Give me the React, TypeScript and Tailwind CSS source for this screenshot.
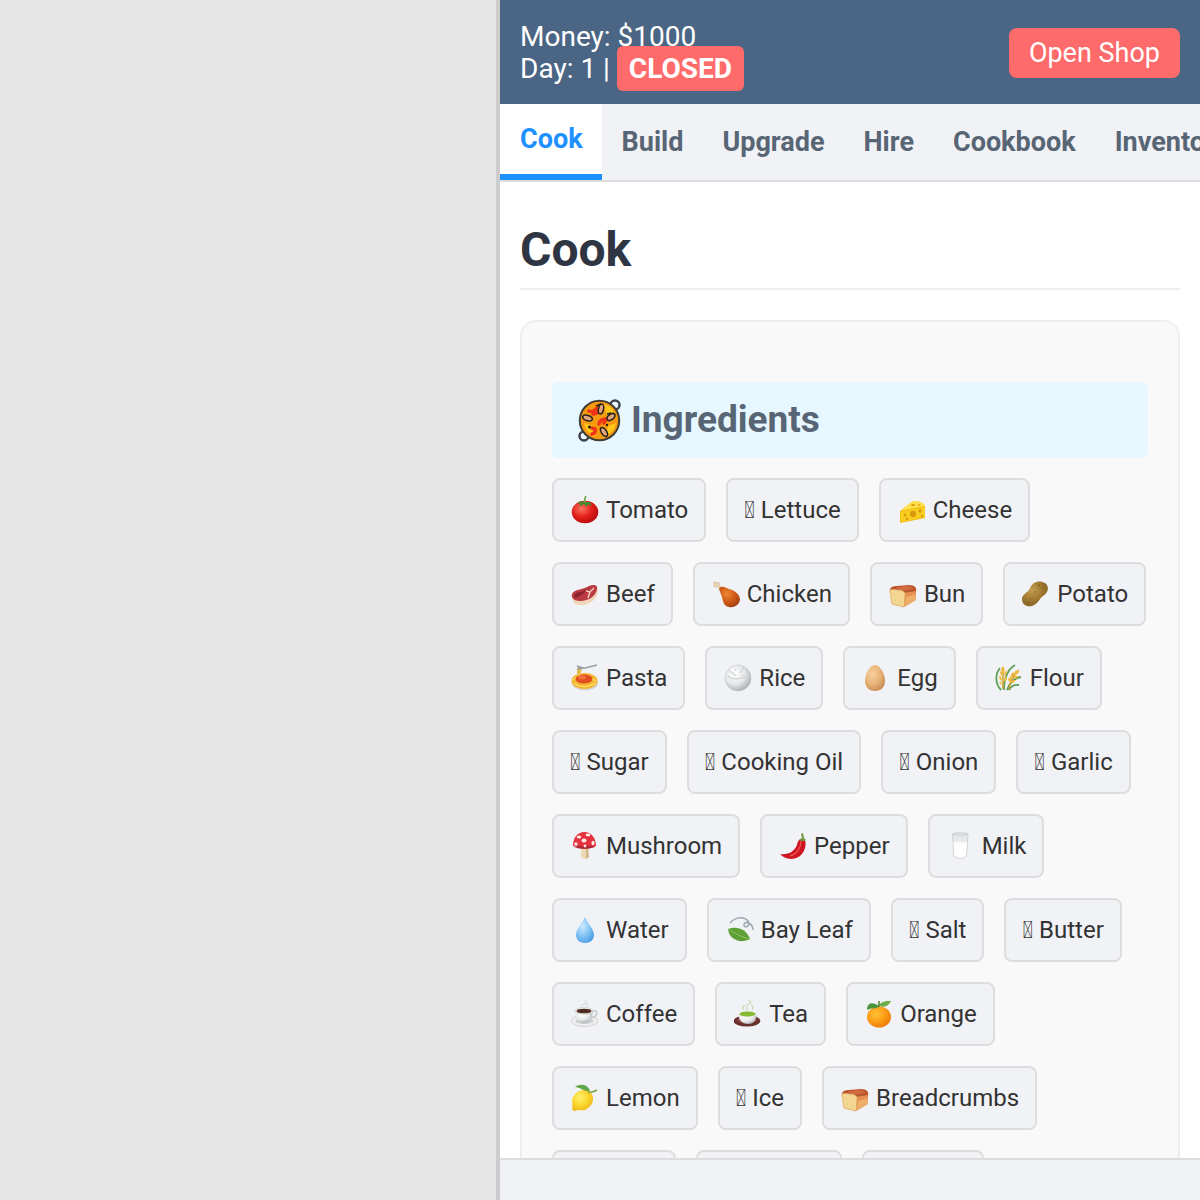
import type { ReactNode } from "react";

const tabs = ["Cook", "Build", "Upgrade", "Hire", "Cookbook", "Inventory"];

const bread = (
  <>
    <path d="M1 11C0 7 5 6 8 6L20 5C26 5 28 8 27 12L13 15Z" fill="#b9542c" />
    <path d="M6 8C12 5.500 20 5 25 8C22 9 18 11 13 11Z" fill="#d06c3f" />
    <path d="M14 13L27 11V20L15 27Z" fill="#e6904f" />
    <path d="M17 17L27 14V20L16 26Z" fill="#f0ac6b" />
    <path d="M1 12C0 9 4 9 8 10C13 10 17 12 16 15L15 27L3 24Z" fill="#f4d693" stroke="#d9a961" strokeWidth=".8" />
    <path d="M5 14h1M9 17h1M6 20h1M11 22h1" stroke="#dfb870" />
  </>
);

const art: Record<string, ReactNode> = {
  Tomato: (
    <>
      <ellipse cx="14" cy="16" rx="13.300" ry="11.300" fill="url(#red)" />
      <path d="M14 7C10 4 8 5 6 8L10 7L8 11L13 8L16 11L17 8L21 10L19 6L15 6Z" fill="#3c8f2e" />
      <path d="M14 7Q13 3 15 0" fill="none" stroke="#63a844" strokeWidth="1.600" />
    </>
  ),
  Cheese: (
    <>
      <path d="M2 15L15 5Q24 5 27 10V22L2 27Z" fill="#f3bd13" />
      <path d="M2 15L15 5Q24 5 27 10Z" fill="#ffe04d" />
      <path d="M3 16L27 11V21L3 26Z" fill="#f9cf20" />
      <g fill="#d99a0c">
        <circle cx="15" cy="18" r="3.200" />
        <circle cx="7" cy="19" r="1.500" />
        <circle cx="22" cy="15" r="1.800" />
        <circle cx="9" cy="23" r="1.300" />
        <circle cx="24" cy="20" r="1.200" />
        <ellipse cx="15" cy="9" rx="2" ry="1" />
        <ellipse cx="21" cy="9" rx="1.500" ry=".8" />
      </g>
    </>
  ),
  Beef: (
    <>
      <path d="M1 16C2 9 12 10 18 6C23 4 27 5 27 10C27 18 20 25 10 25C4 25 1 22 1 16Z" fill="#f1d5b8" />
      <path d="M1 14C3 9 12 10 18 6C23 4 27 5 26 9C25 16 18 21 9 21C3 21 0 18 1 14Z" fill="#b93a42" />
      <path d="M3 15C6 11 12 13 18 8C13 14 8 17 4 18Z" fill="#8e2530" />
      <path d="M15 11L19 12L23 8M19 12L17 18" fill="none" stroke="#f4c9c0" strokeWidth="1.500" />
    </>
  ),
  Chicken: (
    <>
      <path d="M2 4C1 2 4 1 5 3C7 1 8 4 7 5L10 9L8 10L5 6C3 8 1 6 2 4Z" fill="#e9d5b5" stroke="#b79a78" strokeWidth=".5" />
      <path d="M7 9C9 5 13 7 17 9C24 11 28 15 28 20C27 25 22 28 17 27C12 26 11 22 10 17Z" fill="url(#roast)" />
    </>
  ),
  Bun: bread,
  Breadcrumbs: bread,
  Potato: (
    <>
      <path d="M0 19C0 14 6 13 8 8C11 1 18 0 23 3C28 7 26 13 21 16C17 19 16 24 10 26C5 27 0 25 0 19Z" fill="url(#spud)" />
      <path d="M16 5l2 1M20 8l1-1M12 12h1M8 19h1M6 22l1 1" stroke="#765619" />
    </>
  ),
  Pasta: (
    <>
      <ellipse cx="14" cy="19" rx="13" ry="7.500" fill="#d3d4d8" />
      <ellipse cx="13.500" cy="17" rx="13" ry="8" fill="#f4b62e" />
      <path d="M2 16Q8 11 13 12T25 17M3 19Q9 24 17 22T24 18" fill="none" stroke="#ffd962" strokeWidth="1.500" />
      <ellipse cx="13" cy="15" rx="8.500" ry="4.600" fill="#e34e20" />
      <ellipse cx="11" cy="13.500" rx="4" ry="2" fill="#f0703a" />
      <path d="M6 4h5L9 12H6Z" fill="#e8bd4e" />
      <path d="M6 5L14 4L26 1M6 2l6 2M7 3l6 1" fill="none" stroke="#9aa0a5" strokeWidth="1.500" />
    </>
  ),
  Rice: (
    <>
      <circle cx="14" cy="14" r="13" fill="url(#pearl)" stroke="#bbb" strokeWidth=".5" />
      <path d="M3 12Q13 18 25 11M5 6L12 12M20 3L16 9M7 8h1M10 6h2M18 11h2" fill="none" stroke="#d0d2d4" strokeWidth="1.200" />
      <path d="M6 6L10 4L9 8Z" fill="#fff" />
    </>
  ),
  Egg: <path d="M13 1C18 1 23 10 23 17C23 23 19 27 13 27S3 23 3 17C3 10 8 1 13 1Z" fill="url(#shell)" />,
  Flour: (
    <>
      <path d="M6 26C0 20 0 10 5 4M9 26C9 14 12 6 20 1M12 26C15 18 19 14 26 13M14 26Q17 20 24 21" fill="none" stroke="#5c9f57" strokeWidth="1.800" />
      <path d="M8 25L8 3M14 25Q15 15 24 6" fill="none" stroke="#d29a24" strokeWidth="1.500" />
      <path d="M8 2l2 4-2 2-2-2ZM6 6l2 4-1 2-2-3ZM11 6l-2 4 1 2 2-3ZM5 11l2 4-1 2-2-3ZM11 12l-2 4 1 2 2-3ZM6 17l1 4-3-2ZM24 6l-1 4-4 1 1-4ZM19 8v4l-3 2 0-4ZM24 12l-3 3-3-1 3-2ZM16 12v4l-2 2-1-3ZM21 16l-3 3-3-1 3-2Z" fill="#f0b73b" />
    </>
  ),
  Mushroom: (
    <>
      <path d="M10 14H17L18 25Q14 29 10 25Z" fill="#ecd8b5" />
      <path d="M15 15h2l1 10-3 2Z" fill="#d5b88c" />
      <path d="M2 14C2 5 7 0 13.500 0S25 6 25 14Q20 17 13.500 16T2 14Z" fill="#e4313d" />
      <path d="M3 15Q13 19 24 15L20 14H7Z" fill="#b22532" />
      <g fill="#ffe9e3">
        <ellipse cx="8" cy="5" rx="2.300" ry="1.600" />
        <ellipse cx="17" cy="3" rx="2.500" ry="1.400" />
        <ellipse cx="13" cy="8.500" rx="2.500" ry="2" />
        <circle cx="5" cy="12" r="1.700" />
        <ellipse cx="22" cy="11" rx="1.600" ry="2.200" />
        <circle cx="14" cy="14" r="1.400" />
      </g>
    </>
  ),
  Pepper: (
    <>
      <path d="M1 22C9 23 15 20 18 13C19 7 22 6 25 7C28 10 27 19 21 24C14 29 5 27 1 22Z" fill="#ce1422" />
      <path d="M22 9C22 16 18 22 11 24" fill="none" stroke="#ef5652" strokeWidth="1.200" />
      <path d="M20 8Q24 10 27 8L25 6L24 1L22 2L23 6Z" fill="#719b3c" />
    </>
  ),
  Milk: (
    <>
      <path d="M5.500 2L7 24Q13 29 19.500 24L21 2Z" fill="#e7e8ea" stroke="#cfd1d4" />
      <path d="M6.500 10H20L19 24Q13 28 7.500 24Z" fill="#fff" />
      <ellipse cx="13.300" cy="10.500" rx="6.500" ry="1.300" fill="#f7f7f7" />
      <ellipse cx="13.300" cy="2" rx="7.700" ry="1.300" fill="#dddfe1" stroke="#c5c8ca" strokeWidth=".7" />
    </>
  ),
  Water: <path d="M14 1C17 8 23 13 23 19C23 24 19 27 14 27S5 24 5 19C5 13 11 8 14 1Z" fill="url(#drop)" />,
  "Bay Leaf": (
    <>
      <path d="M4 7C9 1 18 0 22 5C25 10 18 13 18 9C18 4 27 7 27 14" fill="none" stroke="#9ba6b0" strokeWidth="1.500" />
      <path d="M2 13C10 10 20 12 24 23C15 28 3 24 2 13Z" fill="#5f9f38" />
      <path d="M3 13Q11 20 24 23" fill="none" stroke="#8cc253" />
    </>
  ),
  Coffee: (
    <>
      <ellipse cx="13.500" cy="21" rx="13.300" ry="5.500" fill="#eee" stroke="#ccc" strokeWidth=".8" />
      <ellipse cx="13.500" cy="21" rx="9" ry="3" fill="#ccced0" />
      <path d="M21 11C27 9 28 16 20 18" fill="none" stroke="#c9cacc" strokeWidth="1.600" />
      <path d="M4 11C5 19 8 23 13 23S21 19 22 11Z" fill="url(#pearl)" />
      <ellipse cx="13" cy="11" rx="9" ry="3.300" fill="#f7f7f7" stroke="#bbb" strokeWidth=".6" />
      <ellipse cx="13" cy="11" rx="7.500" ry="2.300" fill="#512a20" />
      <path d="M11 8Q9 5 13 4T14 0M15 8Q18 5 15 2" fill="none" stroke="#d7d8db" />
    </>
  ),
  Tea: (
    <>
      <ellipse cx="13" cy="21" rx="13.300" ry="5.500" fill="#672f2d" />
      <ellipse cx="13" cy="20" rx="10" ry="3.500" fill="#914844" />
      <path d="M4 14C5 20 8 24 14 24S22 20 23 14Z" fill="url(#pearl)" />
      <ellipse cx="13.500" cy="14" rx="9.500" ry="3.600" fill="#ececea" />
      <ellipse cx="13.500" cy="14" rx="8" ry="2.600" fill="#86b934" />
      <path d="M10 10Q7 7 11 5M14 10Q11 6 15 4T14 0M18 10Q20 7 17 5" fill="none" stroke="#cbdcb7" strokeWidth="1.300" />
    </>
  ),
  Orange: (
    <>
      <ellipse cx="14" cy="17" rx="12" ry="10.500" fill="url(#citrus)" />
      <path d="M2 10C2 3 7 1 14 6C11 10 6 7 2 10Z" fill="#4d943c" />
      <path d="M14 6C16 1 21 1 26 1C24 6 19 8 14 6Z" fill="#70ad4b" />
      <path d="M14 7V1" stroke="#55843a" strokeWidth="1.600" />
    </>
  ),
  Lemon: (
    <>
      <path d="M18 7C24 11 23 20 17 24C13 28 7 25 3 27C0 26 2 22 1 17C2 9 10 4 18 7Z" fill="url(#zest)" />
      <path d="M4 3C9-1 17 0 19 7C13 8 9 3 4 3Z" fill="#60a649" />
      <path d="M17 8Q21 9 26 6" fill="none" stroke="#7da648" strokeWidth="1.600" />
    </>
  ),
};

const ingredients = [
  "Tomato", "Lettuce", "Cheese", "Beef", "Chicken", "Bun", "Potato", "Pasta", "Rice", "Egg", "Flour",
  "Sugar", "Cooking Oil", "Onion", "Garlic", "Mushroom", "Pepper", "Milk", "Water", "Bay Leaf",
  "Salt", "Butter", "Coffee", "Tea", "Orange", "Lemon", "Ice", "Breadcrumbs",
];

const gradients: [string, string, string, string][] = [
  ["red", "#ff7565", "#e21f19", "#b50c0c"],
  ["roast", "#ee8a35", "#cf5a18", "#a63f10"],
  ["spud", "#c39d52", "#a27a32", "#81601f"],
  ["pearl", "#ffffff", "#e5e7e8", "#a9acae"],
  ["shell", "#f8cf9c", "#e9b47b", "#c98d54"],
  ["drop", "#cdeaff", "#84c4f5", "#4c9fe5"],
  ["citrus", "#ffc338", "#fb9d14", "#ee7908"],
  ["zest", "#fff070", "#fbd62d", "#eeb51b"],
];

function Gradients() {
  return (
    <svg className="absolute size-0" aria-hidden="true">
      <defs>
        {gradients.map(([id, light, mid, dark]) => (
          <radialGradient key={id} id={id} cx=".38" cy=".35" r=".7">
            <stop offset="0" stopColor={light} />
            <stop offset=".55" stopColor={mid} />
            <stop offset="1" stopColor={dark} />
          </radialGradient>
        ))}
      </defs>
    </svg>
  );
}

function Pan() {
  return (
    <svg viewBox="0 0 43 43" className="size-[43px] shrink-0" aria-hidden="true">
      <g fill="none" stroke="#3d4246" strokeWidth="2.500">
        <circle cx="37" cy="6" r="4.500" />
        <circle cx="6" cy="37" r="4.500" />
      </g>
      <circle cx="21.500" cy="21.500" r="19.700" fill="#f59a0e" stroke="#3f3c36" strokeWidth="2" />
      <path d="M25 5Q38 8 36 18L29 16ZM6 24Q8 34 17 38L16 27ZM30 27L38 24Q36 34 28 36Z" fill="#ffc61a" />
      <g fill="none" stroke="#f03416" strokeWidth="3.500" strokeLinecap="round">
        <path d="M11 12Q16 14 19 9M15 15L19 14" />
        <path d="M21 25Q22 20 28 20L26 24" />
        <path d="M14 29L17 30Q18 34 14 35" />
      </g>
      <g fill="#e4a77d" stroke="#28221d" strokeWidth="1.500">
        <ellipse cx="23" cy="10" rx="2.500" ry="5" transform="rotate(12 23 10)" />
        <ellipse cx="9.500" cy="19" rx="5" ry="2.600" transform="rotate(18 9.500 19)" />
        <ellipse cx="33" cy="18" rx="4.500" ry="2.600" transform="rotate(-38 33 18)" />
        <ellipse cx="26" cy="33" rx="2.600" ry="5" transform="rotate(-32 26 33)" />
      </g>
      <path d="M18 7L23 5M29 15L33 14" stroke="#28221d" strokeWidth="1.500" />
      <circle cx="11.500" cy="28" r="1.500" fill="#28221d" />
      <circle cx="29" cy="26" r="1.200" fill="#28221d" />
    </svg>
  );
}

export default function App() {
  return (
    <div className="flex h-screen overflow-hidden bg-white font-['Roboto',sans-serif] text-[#333]">
      <Gradients />
      <div className="w-5/12 shrink-0 border-r-4 border-[#ccc] bg-[#e6e6e6]" />
      <main className="flex min-w-0 flex-1 flex-col">
        <header className="flex shrink-0 items-center justify-between bg-[#4b6584] px-5 pt-[21px] pb-[19px] text-[28px] leading-8 text-white">
          <div>
            <div>Money: $1000</div>
            <div>
              Day: 1 | <span className="rounded-md bg-[#ff6b6b] px-3 py-1.5 font-bold">CLOSED</span>
            </div>
          </div>
          <button className="rounded-lg bg-[#ff6b6b] px-5 py-2.5 text-[27px] leading-[30px]">Open Shop</button>
        </header>
        <nav className="flex shrink-0 overflow-hidden border-b-2 border-[#ddd] bg-[#f1f2f6] text-[27px] leading-[30px] font-bold text-[#576574]">
          {tabs.map((t, i) => (
            <button
              key={t}
              className={
                i === 0
                  ? "shrink-0 border-b-6 border-[#1e90ff] bg-white py-5 pr-[19px] pl-5 text-[#1e90ff]"
                  : "shrink-0 py-5 pr-[19px] pl-5"
              }
            >
              {t}
            </button>
          ))}
        </nav>
        <div className="min-h-0 flex-1 overflow-hidden px-5 pt-10">
          <h1 className="mb-[30px] border-b-2 border-[#eee] pb-2.5 text-5xl leading-[56px] font-bold text-[#2f3542]">Cook</h1>
          <section className="rounded-2xl border-2 border-[#eee] bg-[#f9f9f9] px-[30px] pt-[60px] pb-[30px]">
            <h2 className="mb-5 flex items-center gap-2.5 rounded-md bg-[#e6f7ff] px-6.5 py-4 text-[37px] leading-[44px] font-bold text-[#576574]">
              <Pan />
              Ingredients
            </h2>
            <div className="flex flex-wrap gap-5">
              {ingredients.map((name) => (
                <button
                  key={name}
                  className="flex items-center gap-1.5 rounded-lg border-2 border-[#ddd] bg-[#f1f2f6] p-4 text-2xl leading-7"
                >
                  {art[name] ? (
                    <>
                      <svg viewBox="0 0 28 28" className="mx-px size-7 shrink-0" aria-hidden="true">
                        {art[name]}
                      </svg>
                      {name}
                    </>
                  ) : (
                    `\uE000 ${name}`
                  )}
                </button>
              ))}
              <div className="h-16 w-[124px] rounded-lg border-2 border-[#ddd] bg-[#f1f2f6]" />
              <div className="h-16 w-[146px] rounded-lg border-2 border-[#ddd] bg-[#f1f2f6]" />
              <div className="h-16 w-[122px] rounded-lg border-2 border-[#ddd] bg-[#f1f2f6]" />
            </div>
          </section>
        </div>
        <footer className="h-[42px] shrink-0 border-t-2 border-[#ddd] bg-[#f1f2f6]" />
      </main>
    </div>
  );
}
